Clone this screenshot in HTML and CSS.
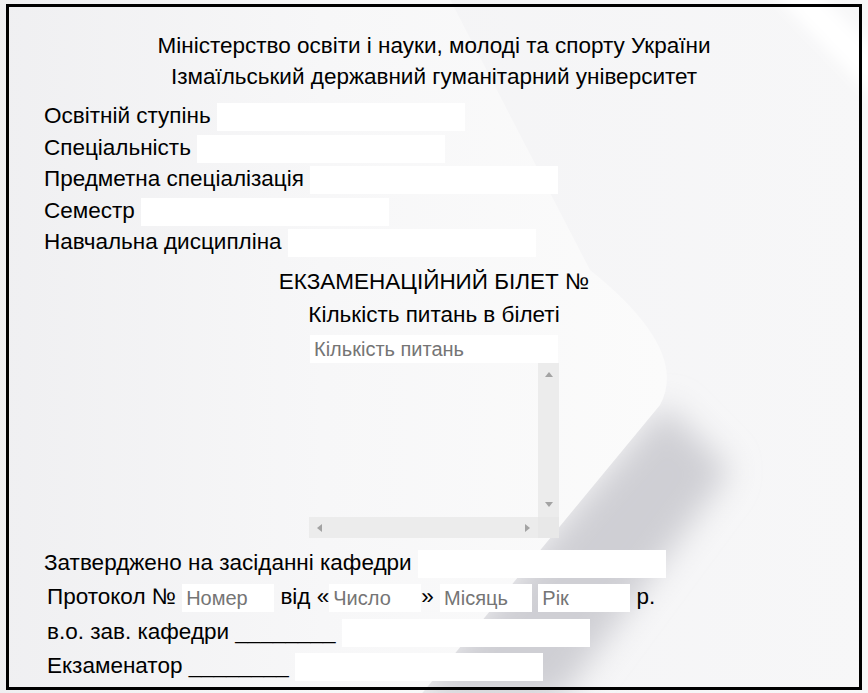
FILE: index.html
```html
<!DOCTYPE html>
<html lang="uk">
<head>
<meta charset="utf-8">
<title>Екзаменаційний білет</title>
<link rel="stylesheet" href="styles.css">
</head>
<body>
<div class="sheet">
  <div class="head">
    <div class="head-line">Міністерство освіти і науки, молоді та спорту України</div>
    <div class="head-line">Ізмаїльський державний гуманітарний університет</div>
  </div>
  <div class="fields">
    <div class="row">Освітній ступінь <input class="field" type="text"></div>
    <div class="row">Спеціальність <input class="field" type="text"></div>
    <div class="row">Предметна спеціалізація <input class="field" type="text"></div>
    <div class="row">Семестр <input class="field" type="text"></div>
    <div class="row">Навчальна дисципліна <input class="field" type="text"></div>
  </div>
  <div class="ticket">
    <div class="ticket-title">ЕКЗАМЕНАЦІЙНИЙ БІЛЕТ №</div>
    <div class="ticket-sub">Кількість питань в білеті</div>
    <input class="field count" type="text" placeholder="Кількість питань">
    <div class="qbox">
      <textarea class="questions"></textarea>
      <div class="vbar"><span class="arr up"></span><span class="arr down"></span></div>
      <div class="hbar"><span class="arr left"></span><span class="arr right"></span></div>
      <div class="corner"></div>
    </div>
  </div>
  <div class="bottom">
    <div class="brow">Затверджено на засіданні кафедри <input class="field" type="text"></div>
    <div class="brow indent">Протокол № <input class="field small" type="text" placeholder="Номер"> від «<input class="field small" type="text" placeholder="Число">» <input class="field small" type="text" placeholder="Місяць"> <input class="field small" type="text" placeholder="Рік"> р.</div>
    <div class="brow indent">в.о. зав. кафедри ________ <input class="field" type="text"></div>
    <div class="brow indent">Екзаменатор ________ <input class="field" type="text"></div>
  </div>
</div>
</body>
</html>
```
FILE: styles.css
```css
html, body {
  margin: 0;
  padding: 0;
  height: 100%;
}
body {
  overflow: hidden;
  font-family: "Liberation Sans", Arial, sans-serif;
  font-size: 22.5px;
  color: #000;
  background-color: #f2f2f4;
  background-repeat: no-repeat;
  background-position: 0 0;
  background-size: 868px 693px;
  background-image: url("data:image/svg+xml,<svg xmlns='http://www.w3.org/2000/svg' width='868' height='693' viewBox='0 0 868 693'><defs><filter id='b' x='-50%' y='-50%' width='200%' height='200%'><feGaussianBlur stdDeviation='16'/></filter><filter id='c' x='-50%' y='-50%' width='200%' height='200%'><feGaussianBlur stdDeviation='7'/></filter><linearGradient id='w' x1='0' y1='0' x2='1' y2='0'><stop offset='0' stop-color='%23efeff1'/><stop offset='0.5' stop-color='%23f7f7f8'/><stop offset='1' stop-color='%23fbfbfb'/></linearGradient><linearGradient id='r' x1='0' y1='0' x2='1' y2='0'><stop offset='0' stop-color='%23f2f2f4'/><stop offset='1' stop-color='%23f7f7f8'/></linearGradient></defs><rect width='868' height='693' fill='url(%23r)'/><path d='M665 405 L410 700 L560 700 L730 470 Z' fill='%23cfcfd4' filter='url(%23b)'/><path d='M-20 -20 H440 L590 270 Q690 350 660 405 L400 720 H-20 Z' fill='url(%23w)'/><path d='M770 -10 L815 -10 L880 55 L880 105 Z' fill='%23ffffff' filter='url(%23c)'/></svg>");
}
.sheet {
  box-sizing: border-box;
  width: 856px;
  height: 686px;
  margin: 4px 0 0 6px;
  border: 3px solid #000;
  padding: 22.5px 0 0 35px;
}
.head {
  margin-left: -35px;
  text-align: center;
}
.head-line {
  height: 31px;
  line-height: 31px;
}
.fields {
  margin-top: 8.75px;
}
.row {
  height: 31.5px;
  line-height: 31.5px;
  white-space: nowrap;
}
.field {
  box-sizing: border-box;
  width: 248px;
  height: 28px;
  border: 0;
  padding: 0 4px;
  margin: 0;
  background: #fff;
  font-family: "Liberation Sans", Arial, sans-serif;
  font-size: 20px;
  color: #000;
  vertical-align: middle;
  outline: none;
}
.field::placeholder {
  color: #757575;
}
.ticket {
  margin: 6.75px 0 0 -35px;
  text-align: center;
}
.ticket-title {
  height: 33px;
  line-height: 33px;
}
.ticket-sub {
  height: 33px;
  line-height: 33px;
}
.count {
  display: block;
  margin: 4.5px auto 0;
}
.qbox {
  display: grid;
  grid-template-columns: 229px 21px;
  grid-template-rows: 154px 21px;
  width: 250px;
  margin: 0 auto;
}
.questions {
  grid-column: 1;
  grid-row: 1;
  box-sizing: border-box;
  width: 100%;
  height: 100%;
  margin: 0;
  border: 0;
  padding: 2px;
  background: transparent;
  overflow: hidden;
  resize: none;
  outline: none;
  font-family: "Liberation Sans", Arial, sans-serif;
  font-size: 20px;
}
.vbar {
  grid-column: 2;
  grid-row: 1;
  display: flex;
  flex-direction: column;
  justify-content: space-between;
  align-items: center;
  padding: 9px 0 10px;
  background: #ececec;
}
.hbar {
  grid-column: 1;
  grid-row: 2;
  display: flex;
  justify-content: space-between;
  align-items: center;
  padding: 0 8px;
  background: #ececec;
}
.corner {
  grid-column: 2;
  grid-row: 2;
  background: #e8e8e8;
}
.arr {
  width: 0;
  height: 0;
  border-style: solid;
  border-color: transparent;
}
.up {
  border-width: 0 4.5px 5px;
  border-bottom-color: #a3a3a3;
}
.down {
  border-width: 5px 4.5px 0;
  border-top-color: #a3a3a3;
}
.left {
  border-width: 4.5px 5px 4.5px 0;
  border-right-color: #a3a3a3;
}
.right {
  border-width: 4.5px 0 4.5px 5px;
  border-left-color: #a3a3a3;
}
.bottom {
  margin-top: 8px;
}
.brow {
  height: 34.33px;
  line-height: 34.33px;
  white-space: nowrap;
}
.indent {
  padding-left: 3px;
}
.small {
  width: 92px;
}
```
